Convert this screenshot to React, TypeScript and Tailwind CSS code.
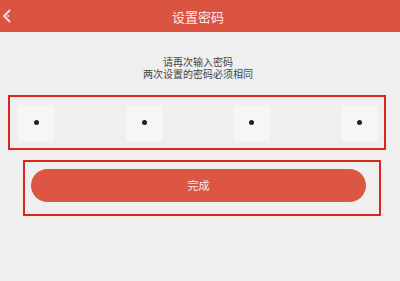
export default function App() {
  const dots = [0, 1, 2, 3]

  return (
    <div className="flex min-h-[281px] w-[400px] flex-col bg-[#efefef] font-['Noto_Sans_CJK_SC',sans-serif]">
      <header className="relative flex h-8 items-center justify-center bg-[#db5442] pr-1">
        <svg className="absolute left-[2px] top-[9px]" width="10" height="14" viewBox="0 0 10 14">
          <polyline points="8,1 2,7 8,13" fill="none" stroke="#fbe3df" strokeWidth="1.8" strokeLinejoin="round" />
          <line x1="5" y1="7" x2="7" y2="7" stroke="#fbe3df" strokeWidth="1.4" />
        </svg>
        <h1 className="text-[13px] leading-none text-[#fbece9]">设置密码</h1>
      </header>

      <main className="flex flex-col">
        <div className="mt-[24px] flex flex-col items-center pr-1 text-[10px] leading-[12px] text-[#444]">
          <p>请再次输入密码</p>
          <p>两次设置的密码必须相同</p>
        </div>

        <div className="ml-[8px] mt-[15px] flex h-[55px] w-[378px] items-center justify-between border-2 border-[#d9261d] pl-[8px] pr-[6px]">
          {dots.map((d) => (
            <div key={d} className="flex h-[36px] w-[37px] items-center justify-center rounded-[3px] bg-[#f6f6f6]">
              <span className="h-[5px] w-[5px] rounded-full bg-[#222]" />
            </div>
          ))}
        </div>

        <div className="ml-[23px] mt-[10px] w-[358px] border-2 border-[#d9261d] pb-[12px] pl-[6px] pt-[7px]">
          <button className="flex h-[33px] w-[335px] items-center justify-center rounded-full bg-[#dc5643] text-[11px] text-[#fbece9]">
            完成
          </button>
        </div>
      </main>
    </div>
  )
}
